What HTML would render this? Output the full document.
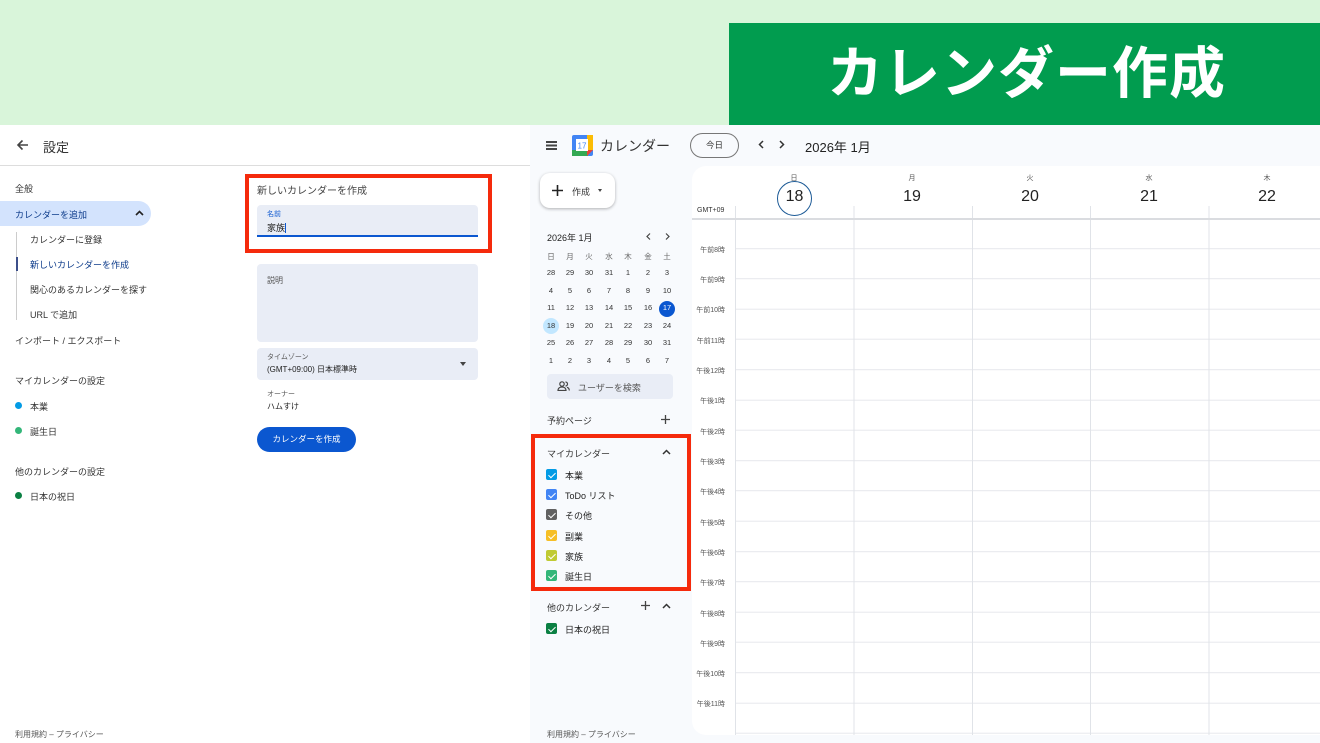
<!DOCTYPE html>
<html><head><meta charset="utf-8">
<style>
*{margin:0;padding:0;box-sizing:border-box}
body{width:1320px;height:743px;overflow:hidden;position:relative;background:#d9f5da;font-family:"Liberation Sans","Noto Sans CJK JP",sans-serif;color:#1f1f1f}
.a{position:absolute;white-space:nowrap}
.banner{left:729px;top:23px;width:591px;height:102px;background:#019c4f;color:#fff;font-size:56px;font-weight:bold;text-align:center;line-height:102px;letter-spacing:1px;padding-left:4px}
.left{left:0;top:125px;width:530px;height:618px;background:#fff}
.right{left:530px;top:125px;width:790px;height:618px;background:#f8fafd}
.s12{font-size:12px}.s10{font-size:10px}.s9{font-size:9px}.s8{font-size:8px}
.grid{left:692px;top:166px;width:628px;height:569px;background:#fff;border-radius:14px 0 0 14px;overflow:hidden}
.mc{position:absolute;width:18px;text-align:center;font-size:7.5px;color:#333}
.cb{position:absolute;width:11px;height:11px;border-radius:2px;left:546px}
.cb::after{content:"";position:absolute;left:3.5px;top:1.5px;width:3px;height:6px;border:solid #fff;border-width:0 1.5px 1.5px 0;transform:rotate(45deg)}
.tl{position:absolute;left:690px;width:35px;text-align:right;font-size:7px;color:#555}
.up{position:absolute}
</style></head><body>
<div class="a banner">カレンダー作成</div>

<div class="a left"></div>
<div class="a" style="left:0;top:165px;width:530px;height:1px;background:#ddd"></div>
<svg class="a" style="left:16px;top:139px" width="13" height="12" viewBox="0 0 13 12"><path d="M12 6H2M6.5 1.5L2 6l4.5 4.5" stroke="#444" stroke-width="1.6" fill="none"/></svg>
<div class="a" style="left:43px;top:137px;font-size:13px;color:#333">設定</div>
<div class="a s9" style="left:15px;top:182px;color:#333">全般</div>
<div class="a" style="left:0;top:201px;width:151px;height:25px;background:#d3e3fd;border-radius:0 13px 13px 0"></div>
<div class="a s9" style="left:15px;top:208px;color:#0b3a8a">カレンダーを追加</div>
<svg class="up" style="left:135px;top:210px" width="9" height="6" viewBox="0 0 9 6"><path d="M1 5L4.5 1.5 8 5" stroke="#222" stroke-width="1.6" fill="none"/></svg>
<div class="a" style="left:16px;top:232px;width:1px;height:88px;background:#ccc"></div>
<div class="a" style="left:16px;top:257px;width:2px;height:14px;background:#3c4f8a"></div>
<div class="a s9" style="left:30px;top:233px;color:#333">カレンダーに登録</div>
<div class="a s9" style="left:30px;top:258px;color:#0b3a8a">新しいカレンダーを作成</div>
<div class="a s9" style="left:30px;top:283px;color:#333">関心のあるカレンダーを探す</div>
<div class="a s9" style="left:30px;top:308px;color:#333">URL で追加</div>
<div class="a s9" style="left:15px;top:334px;color:#333">インポート / エクスポート</div>
<div class="a s9" style="left:15px;top:374px;color:#333">マイカレンダーの設定</div>
<div class="a" style="left:15px;top:402px;width:7px;height:7px;border-radius:50%;background:#039be5"></div>
<div class="a s9" style="left:30px;top:400px;color:#333">本業</div>
<div class="a" style="left:15px;top:427px;width:7px;height:7px;border-radius:50%;background:#33b679"></div>
<div class="a s9" style="left:30px;top:425px;color:#333">誕生日</div>
<div class="a s9" style="left:15px;top:465px;color:#333">他のカレンダーの設定</div>
<div class="a" style="left:15px;top:492px;width:7px;height:7px;border-radius:50%;background:#0b8043"></div>
<div class="a s9" style="left:30px;top:490px;color:#333">日本の祝日</div>
<div class="a s8" style="left:15px;top:729px;color:#555">利用規約 – プライバシー</div>

<div class="a" style="left:245px;top:174px;width:247px;height:79px;border:4px solid #f52a0c"></div>
<div class="a" style="left:257px;top:182px;font-size:10px;color:#444">新しいカレンダーを作成</div>
<div class="a" style="left:257px;top:205px;width:221px;height:32px;background:#e9edf6;border-radius:4px 4px 0 0;border-bottom:2px solid #0b57d0"></div>
<div class="a" style="left:267px;top:209px;font-size:7px;color:#0b57d0">名前</div>
<div class="a s9" style="left:267px;top:221px;color:#222">家族<span style="border-left:1px solid #0b57d0"></span></div>
<div class="a" style="left:257px;top:264px;width:221px;height:78px;background:#e9edf6;border-radius:4px"></div>
<div class="a s8" style="left:267px;top:275px;color:#555">説明</div>
<div class="a" style="left:257px;top:348px;width:221px;height:32px;background:#e9edf6;border-radius:4px"></div>
<div class="a" style="left:267px;top:352px;font-size:7px;color:#555">タイムゾーン</div>
<div class="a s8" style="left:267px;top:364px;color:#222">(GMT+09:00) 日本標準時</div>
<div class="a" style="left:460px;top:362px;width:0;height:0;border-left:3.5px solid transparent;border-right:3.5px solid transparent;border-top:4px solid #444"></div>
<div class="a" style="left:267px;top:389px;font-size:7px;color:#555">オーナー</div>
<div class="a s8" style="left:267px;top:401px;color:#222">ハムすけ</div>
<div class="a" style="left:257px;top:427px;width:99px;height:25px;background:#0b57d0;border-radius:13px;color:#fff;font-size:8.5px;text-align:center;line-height:25px">カレンダーを作成</div>

<div class="a right"></div>
<div class="a" style="left:546px;top:141px;width:11px;height:1.5px;background:#444;box-shadow:0 3.5px 0 #444,0 7px 0 #444"></div>
<svg class="a" style="left:572px;top:135px" width="21" height="21" viewBox="0 0 21 21"><rect x="0" y="0" width="21" height="21" rx="2" fill="#4285f4"/><rect x="0" y="15" width="16" height="6" fill="#34a853"/><rect x="15" y="0" width="6" height="15" fill="#fbbc04"/><path d="M15 15h6l-6 6z" fill="#ea4335"/><rect x="4" y="4" width="12" height="12" fill="#fff"/><text x="10" y="13.5" font-size="8" text-anchor="middle" fill="#4285f4" font-family="Liberation Sans">17</text></svg>
<div class="a" style="left:600px;top:136px;font-size:14px;color:#333">カレンダー</div>
<div class="a" style="left:690px;top:133px;width:49px;height:25px;border:1px solid #777;border-radius:13px;font-size:8.5px;text-align:center;line-height:23px;color:#333">今日</div>
<svg class="a" style="left:758px;top:140px" width="6" height="9" viewBox="0 0 6 9"><path d="M5 1L1.5 4.5 5 8" stroke="#333" stroke-width="1.5" fill="none"/></svg>
<svg class="a" style="left:779px;top:140px" width="6" height="9" viewBox="0 0 6 9"><path d="M1 1l3.5 3.5L1 8" stroke="#333" stroke-width="1.5" fill="none"/></svg>
<div class="a" style="left:805px;top:137px;font-size:13px;color:#222">2026年 1月</div>

<div class="a" style="left:540px;top:173px;width:75px;height:35px;background:#fff;border-radius:10px;box-shadow:0 1px 3px rgba(0,0,0,.3)"></div>
<svg class="a" style="left:552px;top:185px" width="11" height="11" viewBox="0 0 11 11"><path d="M5.5 0v11M0 5.5h11" stroke="#222" stroke-width="1.6"/></svg>
<div class="a s9" style="left:572px;top:185px;color:#333">作成</div>
<div class="a" style="left:598px;top:189px;border-left:2.5px solid transparent;border-right:2.5px solid transparent;border-top:3px solid #444"></div>

<div class="a s9" style="left:547px;top:231px;color:#222">2026年 1月</div>
<svg class="a" style="left:646px;top:233px" width="5" height="7" viewBox="0 0 5 7"><path d="M4 .5L1 3.5 4 6.5" stroke="#444" stroke-width="1.2" fill="none"/></svg>
<svg class="a" style="left:665px;top:233px" width="5" height="7" viewBox="0 0 5 7"><path d="M1 .5l3 3-3 3" stroke="#444" stroke-width="1.2" fill="none"/></svg>
<div class="a" style="left:0;top:0">
<div class="mc" style="left:542px;top:251px;color:#666">日</div><div class="mc" style="left:561px;top:251px;color:#666">月</div><div class="mc" style="left:580px;top:251px;color:#666">火</div><div class="mc" style="left:600px;top:251px;color:#666">水</div><div class="mc" style="left:619px;top:251px;color:#666">木</div><div class="mc" style="left:639px;top:251px;color:#666">金</div><div class="mc" style="left:658px;top:251px;color:#666">土</div>
<div class="mc" style="left:542px;top:268px">28</div><div class="mc" style="left:561px;top:268px">29</div><div class="mc" style="left:580px;top:268px">30</div><div class="mc" style="left:600px;top:268px">31</div><div class="mc" style="left:619px;top:268px">1</div><div class="mc" style="left:639px;top:268px">2</div><div class="mc" style="left:658px;top:268px">3</div>
<div class="mc" style="left:542px;top:286px">4</div><div class="mc" style="left:561px;top:286px">5</div><div class="mc" style="left:580px;top:286px">6</div><div class="mc" style="left:600px;top:286px">7</div><div class="mc" style="left:619px;top:286px">8</div><div class="mc" style="left:639px;top:286px">9</div><div class="mc" style="left:658px;top:286px">10</div>
<div class="mc" style="left:542px;top:303px">11</div><div class="mc" style="left:561px;top:303px">12</div><div class="mc" style="left:580px;top:303px">13</div><div class="mc" style="left:600px;top:303px">14</div><div class="mc" style="left:619px;top:303px">15</div><div class="mc" style="left:639px;top:303px">16</div><div class="a" style="left:659px;top:301px;width:16px;height:16px;border-radius:50%;background:#0b57d0"></div><div class="mc" style="left:658px;top:303px;color:#fff">17</div>
<div class="a" style="left:543px;top:318px;width:16px;height:16px;border-radius:50%;background:#c2e7ff"></div><div class="mc" style="left:542px;top:321px">18</div><div class="mc" style="left:561px;top:321px">19</div><div class="mc" style="left:580px;top:321px">20</div><div class="mc" style="left:600px;top:321px">21</div><div class="mc" style="left:619px;top:321px">22</div><div class="mc" style="left:639px;top:321px">23</div><div class="mc" style="left:658px;top:321px">24</div>
<div class="mc" style="left:542px;top:338px">25</div><div class="mc" style="left:561px;top:338px">26</div><div class="mc" style="left:580px;top:338px">27</div><div class="mc" style="left:600px;top:338px">28</div><div class="mc" style="left:619px;top:338px">29</div><div class="mc" style="left:639px;top:338px">30</div><div class="mc" style="left:658px;top:338px">31</div>
<div class="mc" style="left:542px;top:356px">1</div><div class="mc" style="left:561px;top:356px">2</div><div class="mc" style="left:580px;top:356px">3</div><div class="mc" style="left:600px;top:356px">4</div><div class="mc" style="left:619px;top:356px">5</div><div class="mc" style="left:639px;top:356px">6</div><div class="mc" style="left:658px;top:356px">7</div>
</div>
<div class="a" style="left:547px;top:374px;width:126px;height:25px;background:#e9edf6;border-radius:4px"></div>
<svg class="a" style="left:557px;top:381px" width="13" height="10" viewBox="0 0 13 10"><circle cx="5" cy="3" r="2.2" stroke="#444" stroke-width="1.2" fill="none"/><path d="M1 9.5c0-2.5 2-3.5 4-3.5s4 1 4 3.5z" stroke="#444" stroke-width="1.2" fill="none"/><path d="M8.5 1a2 2 0 010 4M10 6.3c1.3.4 2.3 1.4 2.3 3.2" stroke="#444" stroke-width="1.2" fill="none"/></svg>
<div class="a s9" style="left:578px;top:381px;color:#555">ユーザーを検索</div>
<div class="a s9" style="left:547px;top:414px;color:#333">予約ページ</div>
<svg class="a" style="left:661px;top:415px" width="9" height="9" viewBox="0 0 9 9"><path d="M4.5 0v9M0 4.5h9" stroke="#444" stroke-width="1.3"/></svg>

<div class="a" style="left:531px;top:434px;width:160px;height:157px;border:4px solid #f52a0c"></div>
<div class="a s9" style="left:547px;top:447px;color:#333">マイカレンダー</div>
<svg class="up" style="left:662px;top:449px" width="9" height="6" viewBox="0 0 9 6"><path d="M1 5L4.5 1.5 8 5" stroke="#333" stroke-width="1.5" fill="none"/></svg>
<div class="cb" style="top:469px;background:#039be5"></div><div class="a s9" style="left:565px;top:469px">本業</div>
<div class="cb" style="top:489px;background:#4285f4"></div><div class="a s9" style="left:565px;top:489px">ToDo リスト</div>
<div class="cb" style="top:509px;background:#616161"></div><div class="a s9" style="left:565px;top:509px">その他</div>
<div class="cb" style="top:530px;background:#f6bf26"></div><div class="a s9" style="left:565px;top:530px">副業</div>
<div class="cb" style="top:550px;background:#c0ca33"></div><div class="a s9" style="left:565px;top:550px">家族</div>
<div class="cb" style="top:570px;background:#33b679"></div><div class="a s9" style="left:565px;top:570px">誕生日</div>
<div class="a s9" style="left:547px;top:601px;color:#333">他のカレンダー</div>
<svg class="a" style="left:641px;top:601px" width="9" height="9" viewBox="0 0 9 9"><path d="M4.5 0v9M0 4.5h9" stroke="#444" stroke-width="1.3"/></svg>
<svg class="up" style="left:662px;top:603px" width="9" height="6" viewBox="0 0 9 6"><path d="M1 5L4.5 1.5 8 5" stroke="#333" stroke-width="1.5" fill="none"/></svg>
<div class="cb" style="top:623px;background:#0b8043"></div><div class="a s9" style="left:565px;top:623px">日本の祝日</div>
<div class="a s8" style="left:547px;top:729px;color:#555">利用規約 – プライバシー</div>

<div class="a grid">
 <div class="a" style="left:43px;top:53px;width:585px;height:516px;background:repeating-linear-gradient(to bottom,transparent 0,transparent 29.3px,#e6e8ec 29.3px,#e6e8ec 30.3px);background-position:0 -0.3px"></div>
 <div class="a" style="left:43px;top:40px;width:585px;height:529px;background:repeating-linear-gradient(to right,#e0e3e8 0,#e0e3e8 1px,transparent 1px,transparent 118.4px)"></div>
 <div class="a" style="left:0;top:52px;width:628px;height:2px;background:#dadce0"></div>
</div>
<div class="a" style="left:697px;top:207px;font-size:7px;color:#333">GMT+09</div>
<div class="a" style="left:777px;top:181px;width:35px;height:35px;border-radius:50%;border:1.6px solid #1c5a96;background:#fff"></div>
<div class="a" style="left:784px;top:173px;width:20px;text-align:center;font-size:7px;color:#555">日</div>
<div class="a" style="left:780px;top:188px;width:29px;text-align:center;font-size:16px;color:#222">18</div>
<div class="a" style="left:902px;top:173px;width:20px;text-align:center;font-size:7px;color:#555">月</div>
<div class="a" style="left:897px;top:188px;width:30px;text-align:center;font-size:16px;color:#222">19</div>
<div class="a" style="left:1020px;top:173px;width:20px;text-align:center;font-size:7px;color:#555">火</div>
<div class="a" style="left:1015px;top:188px;width:30px;text-align:center;font-size:16px;color:#222">20</div>
<div class="a" style="left:1139px;top:173px;width:20px;text-align:center;font-size:7px;color:#555">水</div>
<div class="a" style="left:1134px;top:188px;width:30px;text-align:center;font-size:16px;color:#222">21</div>
<div class="a" style="left:1257px;top:173px;width:20px;text-align:center;font-size:7px;color:#555">木</div>
<div class="a" style="left:1252px;top:188px;width:30px;text-align:center;font-size:16px;color:#222">22</div>

<div class="tl" style="top:245px">午前8時</div>
<div class="tl" style="top:275px">午前9時</div>
<div class="tl" style="top:305px">午前10時</div>
<div class="tl" style="top:336px">午前11時</div>
<div class="tl" style="top:366px">午後12時</div>
<div class="tl" style="top:396px">午後1時</div>
<div class="tl" style="top:427px">午後2時</div>
<div class="tl" style="top:457px">午後3時</div>
<div class="tl" style="top:487px">午後4時</div>
<div class="tl" style="top:518px">午後5時</div>
<div class="tl" style="top:548px">午後6時</div>
<div class="tl" style="top:578px">午後7時</div>
<div class="tl" style="top:609px">午後8時</div>
<div class="tl" style="top:639px">午後9時</div>
<div class="tl" style="top:669px">午後10時</div>
<div class="tl" style="top:699px">午後11時</div>
</body></html>
